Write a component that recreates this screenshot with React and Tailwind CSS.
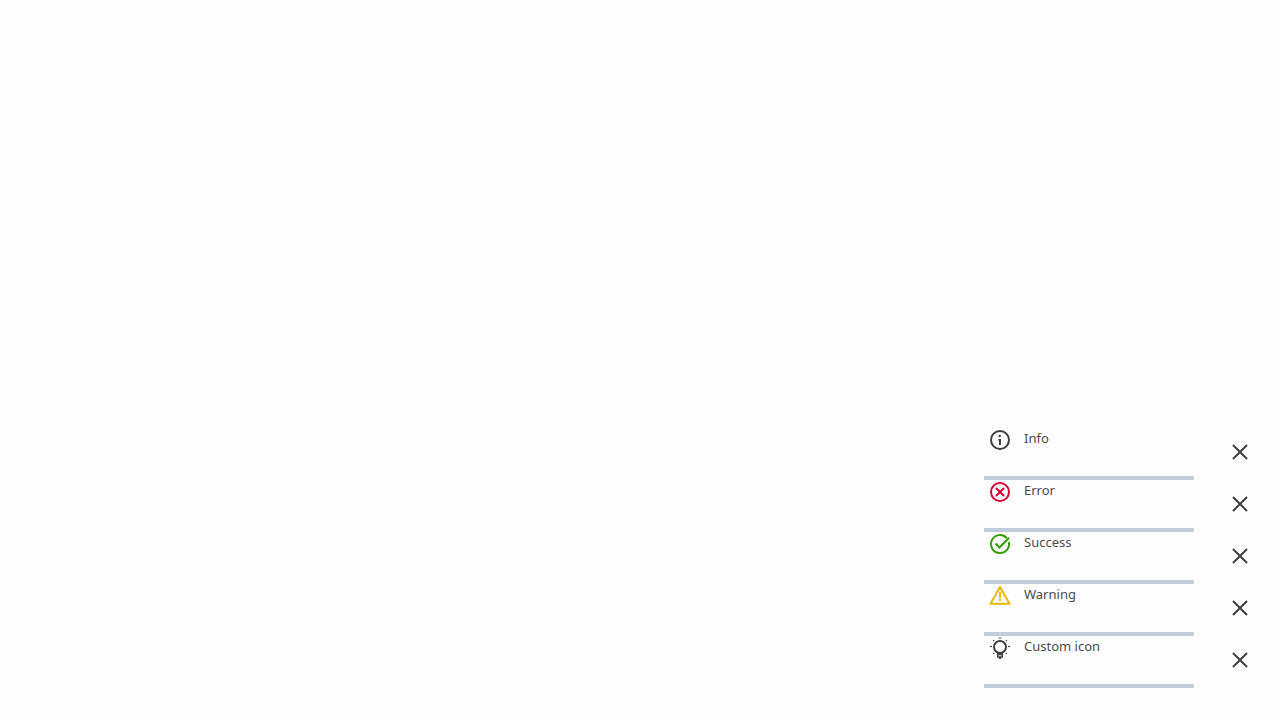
import React from 'react';

function InfoIcon() {
  return (
    <svg viewBox="0 0 24 24" className="size-6 text-[#3e3e42]" fill="none" stroke="currentColor" strokeWidth="2" aria-hidden="true">
      <circle cx="12" cy="12" r="9" />
      <circle cx="11.7" cy="8" r="1.2" fill="currentColor" stroke="none" />
      <path d="M10.3 11h2.7v6h-2v-4.5h-.7z" fill="currentColor" stroke="none" />
    </svg>
  );
}

function ErrorIcon() {
  return (
    <svg viewBox="0 0 24 24" className="size-6 text-[#d90034]" fill="none" stroke="currentColor" strokeWidth="2" aria-hidden="true">
      <circle cx="12" cy="12" r="9" />
      <path d="M8 8l8 8M16 8l-8 8" />
    </svg>
  );
}

function SuccessIcon() {
  return (
    <svg viewBox="0 0 24 24" className="size-6 text-[#349e00]" fill="none" stroke="currentColor" strokeWidth="2" aria-hidden="true">
      <path d="M18.7 6A9 9 0 1 0 20.8 10" />
      <path d="M7.5 11.5l4 4L21 5.8" />
    </svg>
  );
}

function WarningIcon() {
  return (
    <svg viewBox="0 0 24 24" className="size-6 text-[#edb60c]" fill="none" stroke="currentColor" strokeWidth="2" strokeLinejoin="round" aria-hidden="true">
      <path d="M12 3L2.5 19.8H21.5Z" />
      <path d="M12 7.5v6.5M12 15v2" />
    </svg>
  );
}

function BulbIcon() {
  return (
    <svg viewBox="0 0 24 24" className="size-6 text-[#3e3e42]" fill="none" stroke="currentColor" strokeWidth="2" aria-hidden="true">
      <circle cx="12" cy="11" r="6" />
      <path d="M9.7 16v5h4.6v-5M9.7 18.5h4.6M11 22.3h2" strokeWidth="1.4" />
      <path d="M11 2h2M2 10.5h2M20 10.5h2" strokeWidth="1.2" />
      <path d="M5.2 4.2l.9.9M18.8 4.2l-.9.9M5.2 17.8l.9-.9M18.8 17.8l-.9-.9" strokeWidth="1.4" />
    </svg>
  );
}

const toasts = [
  { message: 'Info', Icon: InfoIcon },
  { message: 'Error', Icon: ErrorIcon },
  { message: 'Success', Icon: SuccessIcon },
  { message: 'Warning', Icon: WarningIcon },
  { message: 'Custom icon', Icon: BulbIcon },
];

function Toast({ message, Icon }) {
  return (
    <li className="flex items-start justify-between">
      <div className="w-52.5 border-b-4 border-[#becdd9]">
        <div className="flex h-12 items-start gap-3 px-1">
          <Icon />
          <p className="text-[13px] leading-5">{message}</p>
        </div>
      </div>
      <button type="button" aria-label={`Close ${message}`} className="mt-2 flex size-8 items-center justify-center text-[#3e3e42]">
        <svg viewBox="0 0 24 24" className="size-6" fill="none" stroke="currentColor" strokeWidth="2" aria-hidden="true">
          <path d="M5 5l14 14M19 5L5 19" />
        </svg>
      </button>
    </li>
  );
}

export default function App() {
  return (
    <main className="flex min-h-screen items-end justify-end bg-[#fefefe] pr-6 pb-8 font-['Noto_Sans',sans-serif] text-[#4c4c4c]">
      <ul className="w-68" aria-label="Notifications">
        {toasts.map((toast) => (
          <Toast key={toast.message} {...toast} />
        ))}
      </ul>
    </main>
  );
}
